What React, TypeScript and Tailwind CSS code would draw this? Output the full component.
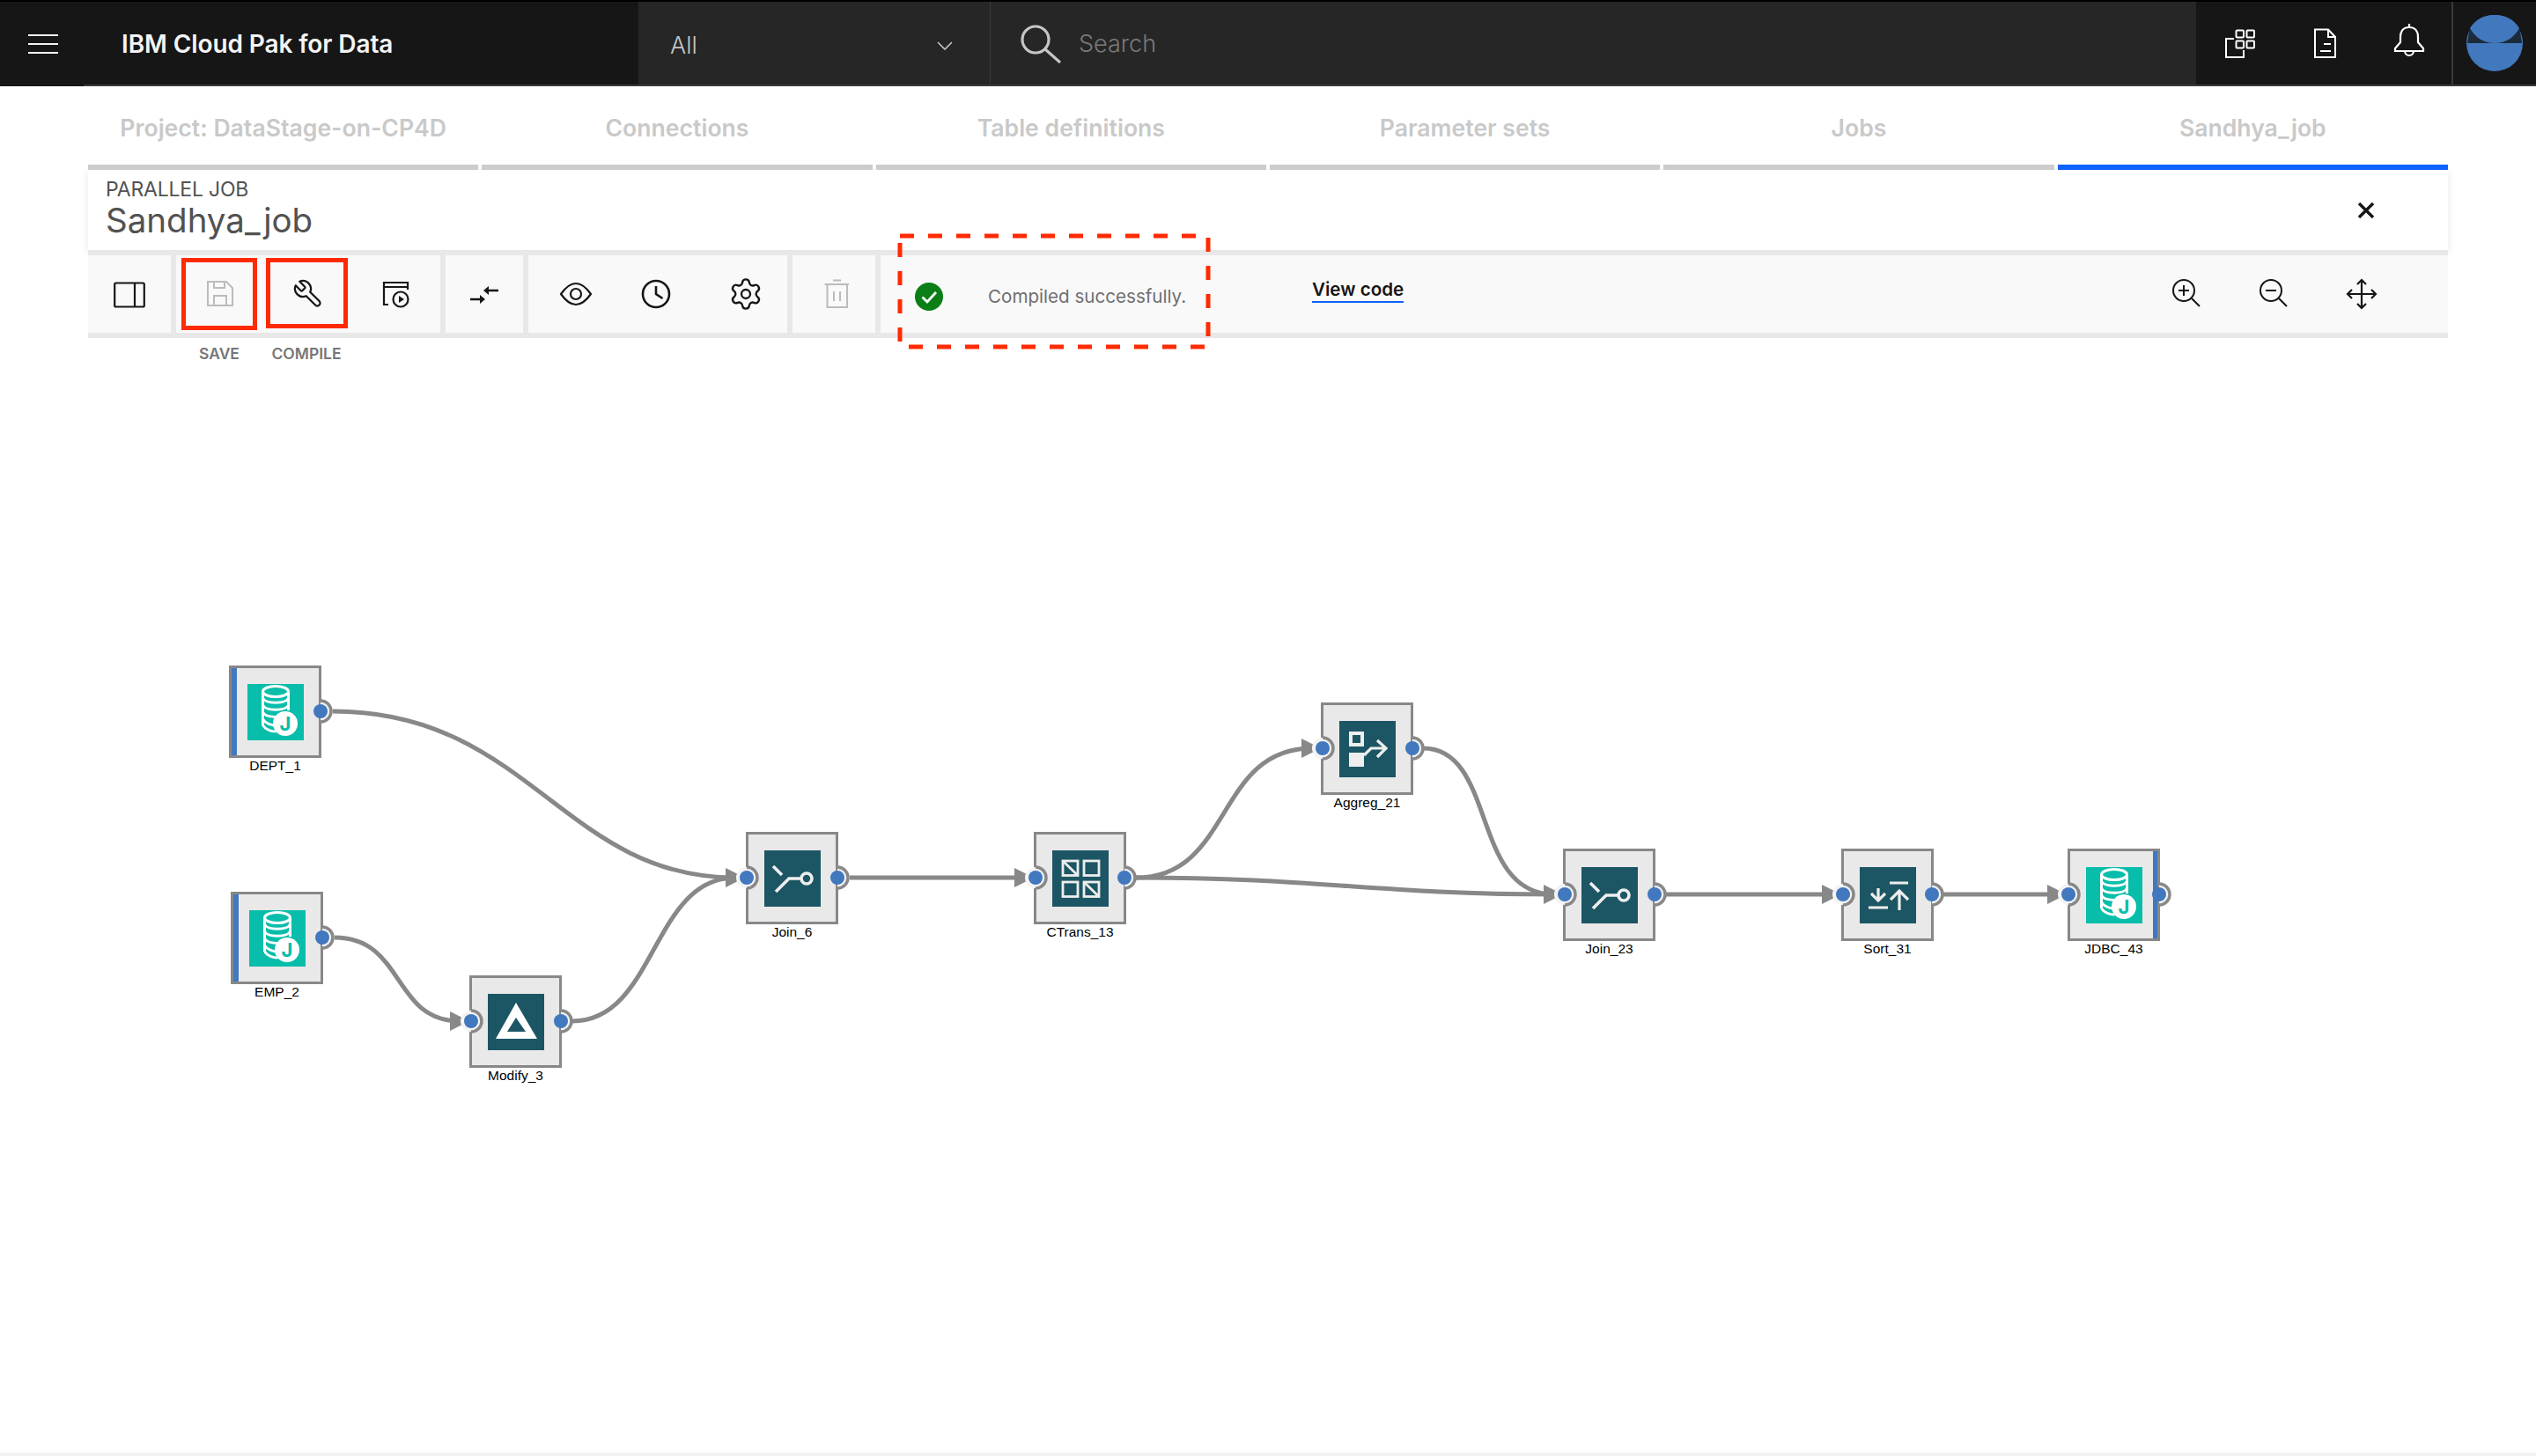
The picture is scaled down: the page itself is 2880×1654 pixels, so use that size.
import { type FC, type ReactNode } from 'react';
import { Settings } from 'lucide-react';

const TABS = ['Project: DataStage-on-CP4D', 'Connections', 'Table definitions', 'Parameter sets', 'Jobs', 'Sandhya_job'];

// canvas starts at y=420 on the page, links and ports use page coordinates through the viewBox
const LINKS = [
  'M378 808 C600 808 640 997 835 997',
  'M380 1065 C460 1065 445 1160 522 1160',
  'M650 1160 C745 1160 740 997 835 997',
  'M965 997 H1165',
  'M1290 997 C1400 997 1380 850 1490 850',
  'M1290 997 C1500 997 1560 1016 1765 1016',
  'M1616 850 C1700 850 1670 1016 1765 1016',
  'M1892 1016 H2080',
  'M2207 1016 H2337',
];

const IN_PORTS: [number, number][] = [[535, 1160], [848, 997], [1176, 997], [1502, 850], [1777, 1016], [2093, 1016], [2349, 1016]];
const OUT_PORTS: [number, number][] = [[364, 808], [366, 1065], [637, 1160], [951, 997], [1277, 997], [1604, 850], [1879, 1016], [2194, 1016], [2452, 1016]];

const Icon36: FC<{ children: ReactNode; color?: string; width?: number }> = ({ children, color = '#161616', width = 2.2 }) => (
  <svg viewBox="0 0 36 36" className="w-[36px] h-[36px]" fill="none" stroke={color} strokeWidth={width}>
    {children}
  </svg>
);

const SourceGlyph = () => (
  <svg viewBox="0 0 64 64" className="w-full h-full">
    <g fill="none" stroke="#fff" strokeWidth="3">
      <ellipse cx="32" cy="8.5" rx="14.5" ry="6" />
      <path d="M17.5 9V47M46.5 9V30" />
      <path d="M17.5 16c3 7 26 7 29 0M17.5 24c3 7 26 7 29 0M17.5 32c3 7 24 7 28 1M17.5 40c3 5 10 7 15 7M17.5 47c3 5 10 7 15 7" />
    </g>
    <circle cx="43" cy="45" r="14" fill="#fff" />
    <text x="43" y="53" textAnchor="middle" fontSize="22" fontWeight="700" fill="#08bdaa" className="font-['Inter',sans-serif]">J</text>
  </svg>
);

const JoinGlyph = () => (
  <svg viewBox="0 0 64 64" className="w-full h-full" fill="none" stroke="#eee" strokeWidth="3.6">
    <path d="M10 18L20 28M13 47L28 32H42" />
    <circle cx="48" cy="32" r="6" />
  </svg>
);

const TransformGlyph = () => (
  <svg viewBox="0 0 64 64" className="w-full h-full" fill="none" stroke="#eee" strokeWidth="2.8">
    <rect x="12" y="12" width="17" height="16.5" />
    <rect x="36" y="12" width="17" height="16.5" />
    <rect x="12" y="36" width="17" height="16.5" />
    <rect x="36" y="36" width="17" height="16.5" />
    <path d="M12 12L29 28.5M36 36L53 52.5" />
  </svg>
);

const AggregateGlyph = () => (
  <svg viewBox="0 0 64 64" className="w-full h-full" fill="none" stroke="#eee" strokeWidth="3.2">
    <rect x="13" y="14" width="13" height="13" strokeWidth="4" />
    <rect x="11" y="36" width="17" height="16" fill="#eee" stroke="none" />
    <path d="M28 39L36 31H52M43 22L53 31L43 41" />
  </svg>
);

const SortGlyph = () => (
  <svg viewBox="0 0 64 64" className="w-full h-full" fill="none" stroke="#eee" strokeWidth="3.2">
    <path d="M21 24V38M13 30L21 38L29 30M10 46H32M34 18H55M45 49V28M35 37L45 27L55 37" />
  </svg>
);

const ModifyGlyph = () => (
  <svg viewBox="0 0 64 64" className="w-full h-full">
    <path fillRule="evenodd" fill="#fff" d="M32 10L56 51H9ZM32 27L22 43H43Z" />
  </svg>
);

interface NodeProps {
  label: string;
  pos: string;
  iconBg: string;
  strip?: 'left' | 'right';
  children: ReactNode;
}

const FlowNode: FC<NodeProps> = ({ label, pos, iconBg, strip, children }) => (
  <div className={`absolute w-[105px] ${pos}`}>
    <div className="relative w-[105px] h-[105px] border-[3px] border-[#888888] bg-[#e9e9e9] flex items-center justify-center">
      {strip === 'left' && <div className="absolute left-0 top-0 bottom-0 w-[6px] bg-[#4178be]" />}
      {strip === 'right' && <div className="absolute right-0 top-0 bottom-0 w-[5px] bg-[#4178be]" />}
      <div className={`w-[64px] h-[64px] ${iconBg}`}>{children}</div>
    </div>
    <div className="text-center text-[15.5px] leading-[18px] text-black font-['Liberation_Sans',sans-serif]">{label}</div>
  </div>
);

const TopBar = () => (
  <header className="flex h-[98px] border-t-2 border-black bg-[#161616] text-[#c6c6c6]">
    <div className="w-[95px] flex items-center pl-[32px]">
      <svg viewBox="0 0 34 24" className="w-[34px] h-[24px]" stroke="#f4f4f4" strokeWidth="2.2">
        <path d="M0 2H34M0 12H34M0 22H34" />
      </svg>
    </div>
    <div className="w-[630px] flex items-center pl-[43px] pt-[2px] border-b-2 border-[#393939]">
      <span className="text-[28px] font-semibold text-[#f4f4f4] tracking-[-0.1px]">IBM Cloud Pak for Data</span>
    </div>
    <div className="w-[400px] flex items-center justify-between pl-[36px] pr-[42px] pt-[6px] bg-[#262626] border-r border-[#393939] border-b-2 border-b-[#393939]">
      <span className="text-[27px] font-light">All</span>
      <svg viewBox="0 0 18 10" className="w-[18px] h-[10px]" fill="none" stroke="#c6c6c6" strokeWidth="1.6">
        <path d="M1 1L9 9L17 1" />
      </svg>
    </div>
    <div className="flex-1 flex items-center pl-[34px] pt-[2px] bg-[#262626] border-b-2 border-[#393939]">
      <svg viewBox="0 0 46 44" className="w-[46px] h-[44px]" fill="none" stroke="#c6c6c6" strokeWidth="3.2">
        <circle cx="17" cy="17" r="15" />
        <path d="M28 28L45 43" />
      </svg>
      <span className="ml-[20px] text-[27px] font-light text-[#7a7a7a]">Search</span>
    </div>
    <div className="w-[290px] flex items-center pl-[2px] border-b-2 border-[#393939]">
      <div className="w-[96px] flex justify-center">
        <Icon36 color="#fff" width={2}>
          <rect x="13.5" y="3.5" width="8.5" height="8" rx="1" />
          <rect x="25.5" y="3.5" width="8.5" height="8" rx="1" />
          <rect x="13.5" y="15.5" width="8.5" height="8" rx="1" />
          <rect x="25.5" y="15.5" width="8.5" height="8" rx="1" />
          <path d="M11 13H2V34H22V26" />
        </Icon36>
      </div>
      <div className="w-[96px] flex justify-center">
        <Icon36 color="#fff" width={2}>
          <path d="M7 2.5H22L30 11V34H7ZM22 2.5V11H30M17 19H25M13 27H25" />
        </Icon36>
      </div>
      <div className="w-[96px] flex justify-center -mt-[6px]">
        <svg viewBox="0 0 36 40" className="w-[36px] h-[40px]" fill="none" stroke="#fff" strokeWidth="2.2">
          <path d="M18 5C10 5 8 11 8 16V22L2 29V32H34V29L28 22V16C28 11 26 5 18 5ZM18 1V5M13 32A5 5 0 0 0 23 32" />
        </svg>
      </div>
    </div>
    <div className="w-[96px] flex items-center justify-center border-l-2 border-[#393939] border-b-2 border-b-[#393939]">
      <svg viewBox="0 0 64 64" className="w-[64px] h-[64px]">
        <circle cx="32" cy="32" r="32" fill="#4178be" />
        <path d="M3.5 16H60.5L63 32H1Z" fill="#1c2b3a" />
        <path d="M4 15C10 26 20 32 32 32C44 32 54 26 60 15C54 5 44 0 32 0C20 0 10 5 4 15Z" fill="#4178be" />
      </svg>
    </div>
  </header>
);

const Toolbar = () => (
  <div className="flex gap-[6px] h-[100px] border-y-[6px] border-[#e8e8e8] bg-[#e8e8e8]">
    <div className="w-[94px] bg-[#f9f9f9] flex items-center justify-center pt-[2px]">
      <Icon36>
        <rect x="1.2" y="4.5" width="33.6" height="27" rx="1.5" />
        <path d="M24 4.5V31.5" />
      </Icon36>
    </div>
    <div className="w-[300px] bg-[#f9f9f9] flex">
      <div className="relative w-[100px] flex items-center justify-center">
        <div className="absolute left-[6px] top-[3px] w-[86px] h-[82px] border-[5px] border-[#ff2a00]" />
        <Icon36 color="#bcbcbc" width={2}>
          <path d="M4 4H25L32 11V31H4ZM11 4V11H23V4M11 31V20H25V31" />
        </Icon36>
      </div>
      <div className="relative w-[100px] flex items-center justify-center">
        <div className="absolute left-[2px] top-[3px] w-[93px] h-[80px] border-[5px] border-[#ff2a00]" />
        <svg viewBox="0 0 24 24" className="w-[36px] h-[36px] -scale-x-100" fill="none" stroke="#161616" strokeWidth="1.5" strokeLinejoin="round">
          <path d="M14.7 6.3a1 1 0 0 0 0 1.4l1.6 1.6a1 1 0 0 0 1.4 0l3.77-3.77a6 6 0 0 1-7.94 7.94l-6.91 6.91a2.12 2.12 0 0 1-3-3l6.91-6.91a6 6 0 0 1 7.94-7.94l-3.76 3.76z" />
        </svg>
      </div>
      <div className="w-[100px] flex items-center justify-center">
        <Icon36>
          <path d="M9 30H4V5H31V13M4 10H31" />
          <circle cx="23" cy="24" r="8.5" />
          <path d="M21 20L27 24L21 28Z" fill="#161616" stroke="none" />
        </Icon36>
      </div>
    </div>
    <div className="w-[88px] bg-[#f9f9f9] flex items-center justify-center">
      <Icon36 width={2.4}>
        <path d="M2 24H14M34 14H22" />
        <path d="M13 19L19 24L13 29ZM23 9L17 14L23 19Z" fill="#161616" stroke="none" />
      </Icon36>
    </div>
    <div className="w-[294px] bg-[#f9f9f9] flex items-center">
      <div className="w-[108px] flex justify-center">
        <Icon36>
          <path d="M1 18Q18 -6 35 18Q18 42 1 18Z" />
          <circle cx="18" cy="18" r="6" />
        </Icon36>
      </div>
      <div className="w-[74px] flex justify-center">
        <Icon36 width={2.6}>
          <circle cx="18" cy="18" r="15" />
          <path d="M18 9V18L25.5 23" />
        </Icon36>
      </div>
      <div className="w-[112px] flex justify-center pl-[18px]">
        <Settings size={40} strokeWidth={1.4} color="#161616" />
      </div>
    </div>
    <div className="w-[94px] bg-[#f9f9f9] flex items-center justify-center pl-[6px]">
      <Icon36 color="#bcbcbc" width={2}>
        <path d="M4.5 7H32M14 2.5H23M7.5 7V33H30V7M15 15V26M22 15V26" />
      </Icon36>
    </div>
    <div className="relative flex-1 bg-[#f9f9f9] flex items-center pl-[39px]">
      <svg viewBox="0 0 32 32" className="w-[32px] h-[32px] mt-[6px]">
        <circle cx="16" cy="16" r="16" fill="#0b7f16" />
        <path d="M8.5 16.5L14 22L24 11" fill="none" stroke="#fff" strokeWidth="2.8" />
      </svg>
      <span className="w-[419px] pl-[51px] mt-[6px] text-[20.6px] text-[#6f6f6f]">Compiled successfully.</span>
      <a className="-mt-[8px] text-[20.6px] font-semibold text-[#161616] border-b-[2px] border-[#0f62fe] leading-[26px]">View code</a>
      <div className="ml-auto pr-[80px] flex gap-[63px] items-center">
        <Icon36 width={2}>
          <circle cx="14" cy="14" r="12" />
          <path d="M23 23L32 32M8 14H20M14 8V20" />
        </Icon36>
        <Icon36 width={2}>
          <circle cx="14" cy="14" r="12" />
          <path d="M23 23L32 32M8 14H20" />
        </Icon36>
        <Icon36 width={2.2}>
          <path d="M18 2V34M2 18H34M13 7L18 2L23 7M13 29L18 34L23 29M7 13L2 18L7 23M29 13L34 18L29 23" />
        </Icon36>
      </div>
      <svg className="absolute left-[22px] -top-[22px] w-[350px] h-[126px] overflow-visible" fill="none">
        <rect x="0" y="0" width="350" height="126" stroke="#ff2a00" strokeWidth="5" strokeDasharray="16 16" />
      </svg>
    </div>
  </div>
);

export default function App() {
  return (
    <div className="h-[1654px] flex flex-col bg-white font-['Inter',sans-serif]">
      <TopBar />
      <div className="px-[100px]">
        <div className="flex gap-[4px] h-[95px]">
          {TABS.map((tab, i) => (
            <div
              key={tab}
              className={`flex-1 flex items-center justify-center pt-[6px] border-b-[6px] text-[26.6px] font-semibold text-[#c9c9c9] ${i === 5 ? 'border-[#0f62fe]' : 'border-[#cccccc]'}`}
            >
              {tab}
            </div>
          ))}
        </div>
        <div className="h-[91px] bg-white pl-[20px] pr-[84px] flex items-center justify-between shadow-[0_2px_10px_rgba(0,0,0,0.1)]">
          <div className="text-[#525252] -mt-[4px]">
            <div className="text-[23px] leading-[26px] tracking-[-0.2px]">PARALLEL JOB</div>
            <div className="text-[38.5px] leading-[44px]">Sandhya_job</div>
          </div>
          <svg viewBox="0 0 18 18" className="w-[18px] h-[18px]" stroke="#161616" strokeWidth="3.4">
            <path d="M1 1L17 17M17 1L1 17" />
          </svg>
        </div>
        <Toolbar />
        <div className="h-[36px] flex pl-[99px] text-[17.5px] font-semibold text-[#777777] items-center">
          <div className="w-[100px] text-center">SAVE</div>
          <div className="w-[98px] text-center">COMPILE</div>
        </div>
      </div>

      <div className="relative flex-1">
        <FlowNode label="DEPT_1" pos="left-[260px] top-[336px]" iconBg="bg-[#08bdaa]" strip="left"><SourceGlyph /></FlowNode>
        <FlowNode label="EMP_2" pos="left-[262px] top-[593px]" iconBg="bg-[#08bdaa]" strip="left"><SourceGlyph /></FlowNode>
        <FlowNode label="Modify_3" pos="left-[533px] top-[688px]" iconBg="bg-[#1c5664]"><ModifyGlyph /></FlowNode>
        <FlowNode label="Join_6" pos="left-[847px] top-[525px]" iconBg="bg-[#1c5664]"><JoinGlyph /></FlowNode>
        <FlowNode label="CTrans_13" pos="left-[1174px] top-[525px]" iconBg="bg-[#1c5664]"><TransformGlyph /></FlowNode>
        <FlowNode label="Aggreg_21" pos="left-[1500px] top-[378px]" iconBg="bg-[#1c5664]"><AggregateGlyph /></FlowNode>
        <FlowNode label="Join_23" pos="left-[1775px] top-[544px]" iconBg="bg-[#1c5664]"><JoinGlyph /></FlowNode>
        <FlowNode label="Sort_31" pos="left-[2091px] top-[544px]" iconBg="bg-[#1c5664]"><SortGlyph /></FlowNode>
        <FlowNode label="JDBC_43" pos="left-[2348px] top-[544px]" iconBg="bg-[#08bdaa]" strip="right"><SourceGlyph /></FlowNode>

        <svg viewBox="0 420 2880 1230" className="absolute inset-0 w-full h-full pointer-events-none" fill="none">
          {LINKS.map(d => (
            <path key={d} d={d} stroke="#888888" strokeWidth="5" />
          ))}
          {IN_PORTS.map(([x, y]) => (
            <path key={x} d={`M${x - 24} ${y - 11}L${x - 2} ${y}L${x - 24} ${y + 11}Z`} fill="#888888" />
          ))}
          {IN_PORTS.map(([x, y]) => (
            <g key={x}>
              <circle cx={x} cy={y} r="12" fill="#f4f4f4" />
              <path d={`M${x} ${y - 12}A12 12 0 0 1 ${x} ${y + 12}`} stroke="#888888" strokeWidth="3.5" />
              <circle cx={x} cy={y} r="8" fill="#4178be" />
            </g>
          ))}
          {OUT_PORTS.map(([x, y]) => (
            <g key={x}>
              <path d={`M${x} ${y - 12}A12 12 0 0 1 ${x} ${y + 12}Z`} fill="#f4f4f4" />
              <path d={`M${x} ${y - 12}A12 12 0 0 1 ${x} ${y + 12}`} stroke="#888888" strokeWidth="3.5" />
              <circle cx={x} cy={y} r="8" fill="#4178be" />
            </g>
          ))}
        </svg>
      </div>
      <div className="h-[4px] bg-[#f3f3f3]" />
    </div>
  );
}
